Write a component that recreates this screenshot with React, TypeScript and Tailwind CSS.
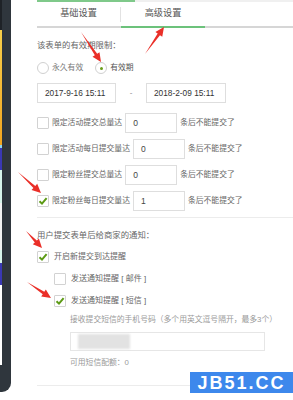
import type { ReactNode } from 'react'

const FONT = { fontFamily: '"Liberation Sans", "Noto Sans CJK SC", sans-serif' }

type Pt = [number, number]

// annotation arrows: [tail, tip]
const ARROWS: [Pt, Pt][] = [
  [[81, 32], [101, 62]],
  [[145, 54], [164, 27]],
  [[18, 172], [41, 193]],
  [[26, 231], [42, 248]],
  [[27, 282], [51, 298]],
]

function arrowPoints([tail, tip]: [Pt, Pt]) {
  const dx = tip[0] - tail[0]
  const dy = tip[1] - tail[1]
  const len = Math.hypot(dx, dy)
  const ux = dx / len
  const uy = dy / len
  const nx = -uy
  const ny = ux
  const headLen = 9
  const bx = tip[0] - ux * headLen
  const by = tip[1] - uy * headLen
  const sw = 1.4
  const hw = 4.2
  const pts: Pt[] = [
    tail,
    [bx + nx * sw, by + ny * sw],
    [bx + nx * hw, by + ny * hw],
    tip,
    [bx - nx * hw, by - ny * hw],
    [bx - nx * sw, by - ny * sw],
  ]
  return pts.map((p) => p.join(',')).join(' ')
}

function Checkbox({ checked = false }: { checked?: boolean }) {
  return (
    <span className="w-[12px] h-[12px] shrink-0 border border-[#d2d2d2] rounded-[1px] bg-white flex items-center justify-center">
      {checked && (
        <svg className="w-[10px] h-[10px]" viewBox="0 0 10 10" fill="none" stroke="#5c9a14" strokeWidth={2}>
          <path d="M1.5 5.2 L4 7.6 L8.6 2.2" />
        </svg>
      )}
    </span>
  )
}

function Radio({ checked = false }: { checked?: boolean }) {
  return (
    <span className="w-[12px] h-[12px] shrink-0 border border-[#d0d0d0] rounded-full bg-white flex items-center justify-center">
      {checked && <span className="w-[3px] h-[3px] rounded-full bg-[#6a9e1c]" />}
    </span>
  )
}

function LimitRow({ label, value, checked }: { label: string; value: string; checked?: boolean }) {
  return (
    <div className="h-[20px] flex items-center">
      <Checkbox checked={checked} />
      <span className="ml-[3px] text-[7.8px] text-[#666] whitespace-nowrap">{label}</span>
      <span className="ml-[3px] w-[52px] h-[20px] border border-[#dedede] flex items-center pl-[7px] text-[8.5px] text-[#444]">
        {value}
      </span>
      <span className="ml-[3px] text-[7.8px] text-[#666] whitespace-nowrap">条后不能提交了</span>
    </div>
  )
}

function CheckLine({ checked, children, indent }: { checked?: boolean; children: ReactNode; indent?: boolean }) {
  return (
    <div className={`h-[12px] flex items-center ${indent ? 'ml-[17px]' : ''}`}>
      <Checkbox checked={checked} />
      <span className="ml-[5px] text-[8px] text-[#666] whitespace-nowrap">{children}</span>
    </div>
  )
}

export default function App() {
  return (
    <div className="w-[293px] h-[400px] relative overflow-hidden bg-white flex" style={FONT}>
      {/* phone preview edge */}
      <div className="w-[11px] h-[392px] shrink-0 bg-[#2f363d] rounded-br-[9px] overflow-hidden">
        <div className="w-[2px] flex flex-col">
          <div className="h-[30px] bg-[#1e2227]" />
          <div className="h-[115px] bg-gradient-to-b from-[#f7cf4a] to-[#f2a51f]" />
          <div className="h-[3px] bg-[#8fd6ee]" />
          <div className="h-[22px] bg-[#3a38b4]" />
          <div className="h-[33px] bg-[#d6f4ea]" />
          <div className="h-[47px] bg-[#f3f3f3]" />
          <div className="h-[13px] bg-[#d6f4ea]" />
          <div className="h-[22px] bg-[#3a38b4]" />
          <div className="h-[80px] bg-white" />
        </div>
      </div>

      <div className="flex-1 pl-[26px] flex flex-col">
        {/* top line */}
        <div className="h-[2px] flex">
          <div className="w-[98px] bg-[#7fc98a]" />
          <div className="flex-1 bg-[#f0f0f0]" />
        </div>

        {/* tabs */}
        <div className="h-[26px] flex border-b-2 border-[#d6d6d6]">
          <div className="w-[83px] flex items-center justify-center text-[9.2px] text-[#555]">基础设置</div>
          <div className="w-px h-[15px] mt-[5px] bg-[#e2e2e2]" />
          <div className="w-[84px] -mb-[2px] border-b-2 border-[#6cc27b] flex items-center justify-center text-[9.2px] text-[#555]">
            高级设置
          </div>
        </div>

        <div className="mt-[11px] h-[12px] leading-[12px] text-[8.4px] text-[#666]">该表单的有效期限制：</div>

        <div className="mt-[11px] h-[12px] flex items-center">
          <Radio />
          <span className="ml-[3px] text-[7.8px] text-[#777]">永久有效</span>
          <span className="ml-[12px]">
            <Radio checked />
          </span>
          <span className="ml-[3px] text-[7.8px] text-[#555]">有效期</span>
        </div>

        <div className="mt-[9px] h-[20px] flex items-center">
          <div className="w-[79px] h-[20px] border border-[#dedede] flex items-center pl-[7px] text-[8.3px] text-[#333] whitespace-nowrap">
            2017-9-16 15:11
          </div>
          <div className="w-[30px] text-center text-[8px] text-[#888]">-</div>
          <div className="w-[80px] h-[20px] border border-[#dedede] flex items-center pl-[7px] text-[8.3px] text-[#333] whitespace-nowrap">
            2018-2-09 15:11
          </div>
        </div>

        <div className="mt-[10px] flex flex-col gap-[6px]">
          <LimitRow label="限定活动提交总量达" value="0" />
          <LimitRow label="限定活动每日提交量达" value="0" />
          <LimitRow label="限定粉丝提交总量达" value="0" />
          <LimitRow label="限定粉丝每日提交量达" value="1" checked />
        </div>

        <div className="mt-[6px] border-t border-[#ececec]" />

        <div className="mt-[11px] h-[12px] leading-[12px] text-[8.4px] text-[#666]">用户提交表单后给商家的通知：</div>

        <div className="mt-[10px]">
          <CheckLine checked>开启新提交到达提醒</CheckLine>
        </div>
        <div className="mt-[10px]">
          <CheckLine indent>发送通知提醒 [ 邮件 ]</CheckLine>
        </div>
        <div className="mt-[10px]">
          <CheckLine indent checked>发送通知提醒 [ 短信 ]</CheckLine>
        </div>

        <div className="ml-[33px] mt-[7px] h-[12px] leading-[12px] text-[7.8px] text-[#9a9a9a] whitespace-nowrap">
          接收提交短信的手机号码（多个用英文逗号隔开，最多3个）
        </div>
        <div className="ml-[33px] mt-[6px] w-[195px] h-[19px] border border-[#e6e6e6] flex items-center pl-[7px]">
          <div className="w-[52px] h-[15px] bg-[#e2e2e2] blur-[1px]" />
        </div>
        <div className="ml-[33px] mt-[6px] h-[12px] leading-[12px] text-[7.8px] text-[#9a9a9a]">可用短信配额：0</div>

        <div className="mt-[16px] border-t border-[#ececec]" />
      </div>

      {/* watermark */}
      <div className="absolute left-[190px] top-[372px] w-[103px] h-[21px] bg-[#3d88ec] flex items-center justify-center">
        <span className="text-white font-bold text-[18px] leading-none tracking-[2px]" style={{ fontFamily: '"Liberation Sans", sans-serif' }}>
          JB51.CC
        </span>
      </div>

      {/* annotation arrows */}
      <svg className="absolute inset-0 pointer-events-none" width={293} height={400} viewBox="0 0 293 400">
        {ARROWS.map((a, i) => (
          <polygon key={i} points={arrowPoints(a)} fill="#ea2f28" />
        ))}
      </svg>
    </div>
  )
}
